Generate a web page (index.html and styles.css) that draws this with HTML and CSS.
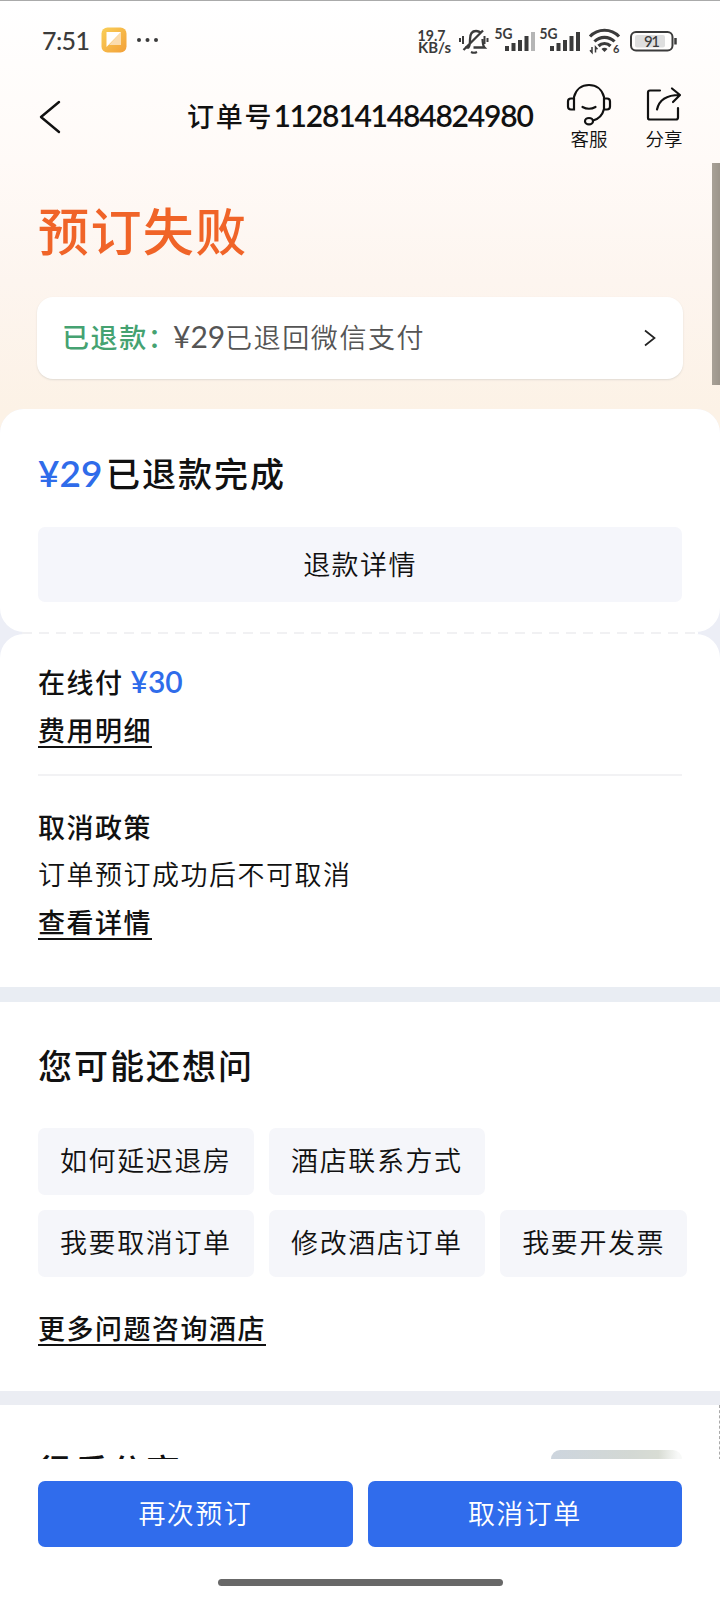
FILE: index.html
```html
<!DOCTYPE html>
<html lang="zh-CN">
<head>
<meta charset="utf-8">
<title>订单详情</title>
<link rel="stylesheet" href="styles.css">
</head>
<body>
<div class="screen">
  <div class="top">
    <div class="status">
      <span class="clock">7:51</span>
      <svg class="app-icon" width="26" height="26" viewBox="0 0 26 26"><defs><linearGradient id="g" x1="0" y1="0" x2="1" y2="1"><stop offset="0" stop-color="#f9cf58"/><stop offset="1" stop-color="#f3a038"/></linearGradient></defs><rect x=".5" y=".5" width="25" height="25" rx="6" fill="url(#g)"/><path d="M20 5v13H8z" fill="#fbdcae"/><path d="M5.500 5H20L5.500 20z" fill="#fff"/></svg>
      <svg class="dots" width="24" height="6" viewBox="0 0 24 6" fill="#3b3b3b"><circle cx="3" cy="3" r="2"/><circle cx="11.500" cy="3" r="2"/><circle cx="20" cy="3" r="2"/></svg>
      <svg class="sys" width="262" height="30" viewBox="416 25 262 30" fill="none" stroke="#3b3b3b" stroke-width="2">
        <path d="M465 46.500h3.500c1.500-1.500 1.500-4 1.500-8 0-5 2-8.500 6-8.500 2.500 0 4 1 5.200 2.700M482.500 38c.2 4 .5 7 2 8.500h-11M463.500 49 483 29.500" stroke-width="2.300"/><path d="M471 51q3 1.500 6 0M460 37v4M463 35v8M484.500 35v8M487.500 37v4"/>
        <g fill="#3b3b3b" stroke="none"><rect x="505" y="45" width="4" height="5"/><rect x="511.500" y="42" width="4" height="8"/><rect x="518" y="39" width="4" height="11"/><rect x="524.500" y="35" width="4" height="15"/><rect x="531" y="31" width="4" height="19" fill="#b5b5b5"/><rect x="550" y="45" width="4" height="5"/><rect x="556.500" y="42" width="4" height="8"/><rect x="563" y="39" width="4" height="11"/><rect x="569.500" y="35" width="4" height="15"/><rect x="576" y="31" width="4" height="19"/><path d="M604.500 51l-3-3a4 4 0 0 1 6 0z"/></g>
        <path d="M590 35.500a20 20 0 0 1 29 0M594.500 40.500a14 14 0 0 1 20 0M598.500 45a8.500 8.500 0 0 1 12 0" stroke-width="3.200"/>
        <path d="M592 46v5.500l-2-2.300M595.500 51.500V46l2 2.300" stroke-width="1.500"/>
        <rect x="631" y="31" width="41.500" height="18.500" rx="5"/><rect x="635" y="34" width="30" height="12.500" rx="2" fill="#dedede" stroke="none"/><path d="M675.500 37v6.500" stroke-width="2.500"/>
        <g class="sys-text"><text x="417.500" y="39.500" textLength="28" lengthAdjust="spacingAndGlyphs">19.7</text><text x="418" y="52" textLength="33" lengthAdjust="spacingAndGlyphs">KB/s</text><text x="494.500" y="38" textLength="18" lengthAdjust="spacingAndGlyphs">5G</text><text x="539.500" y="38" textLength="18" lengthAdjust="spacingAndGlyphs">5G</text><text x="613" y="52" class="small">6</text><text x="644" y="46" class="batt" textLength="16">91</text></g>
      </svg>
    </div>
    <div class="nav">
      <svg class="back" width="22" height="34" viewBox="0 0 22 34"><path d="M20 2 2 17l18 15" fill="none" stroke="#111" stroke-width="2.400" stroke-linecap="round" stroke-linejoin="round"/></svg>
      <h1 class="title">订单号<span class="num">1128141484824980</span></h1>
      <div class="action service">
        <svg width="46" height="44" viewBox="566 83 46 44" fill="none" stroke="#111" stroke-width="2.200" stroke-linecap="round"><path d="M574 97c2-8 8-12 15-12s13 4 15 12M574 98.500h-3q-3 0-3 3v5q0 3 3 3h3zM604 98.500h3q3 0 3 3v5q0 3-3 3h-3zM604 109c-1.500 6-5 10-11 11.500M582.500 107q6.500 3.500 13 0"/><ellipse cx="589" cy="121.200" rx="4" ry="3.200"/></svg>
        <span>客服</span>
      </div>
      <div class="action share">
        <svg width="38" height="38" viewBox="645 86 38 38" fill="none" stroke="#111" stroke-width="2.200" stroke-linecap="round" stroke-linejoin="round"><path d="M660 90.500h-10q-2 0-2 2V118q0 1.500 2 1.500h26q2 0 2-2V108M657 109.500c2-9 9-14.500 22.500-14.500M672 88.500l8 6.500-7 7"/></svg>
        <span>分享</span>
      </div>
    </div>
    <h2 class="state">预订失败</h2>
    <div class="refund">
      <b>已退款：</b><span class="yen">¥29</span><span class="to">已退回微信支付</span>
      <svg width="12" height="18" viewBox="0 0 12 18"><path d="M1 1.500 10.500 9 1 16.500" fill="none" stroke="#222" stroke-width="1.700"/></svg>
    </div>
    <div class="scrollbar"></div>
  </div>
  <div class="ticket">
    <section class="card done">
      <h3 class="heading"><span class="blue">¥29</span>已退款完成</h3>
      <div class="detail">退款详情</div>
    </section>
    <div class="perforation"></div>
    <section class="card fees">
      <p class="strong">在线付<span class="blue">¥30</span></p>
      <p class="strong"><a>费用明细</a></p>
      <div class="rule"></div>
      <p class="strong">取消政策</p>
      <p class="policy">订单预订成功后不可取消</p>
      <p class="strong"><a>查看详情</a></p>
    </section>
  </div>
  <section class="ask">
    <h3 class="heading">您可能还想问</h3>
    <div class="chips"><span>如何延迟退房</span><span>酒店联系方式</span></div>
    <div class="chips"><span>我要取消订单</span><span>修改酒店订单</span><span>我要开发票</span></div>
    <p class="strong more"><a>更多问题咨询酒店</a></p>
  </section>
  <section class="sharing">
    <h3 class="heading">很乐分享</h3>
    <div class="thumb"></div>
    <div class="edge"></div>
  </section>
  <footer class="bar">
    <div class="buttons"><div>再次预订</div><div>取消订单</div></div>
    <div class="home"></div>
  </footer>
</div>
</body>
</html>
```
FILE: styles.css
```css
* { box-sizing: border-box; }
body, h1, h2, h3, p { margin: 0; }
body { background: #fff; color: #111; font-family: "Noto Sans CJK SC", sans-serif; font-weight: 350; }
.screen { width: 720px; height: 1600px; overflow: hidden; display: flex; flex-direction: column; background: #fff; }
.top { position: relative; height: 430px; flex: none; border-top: 1px solid #aaa; background: linear-gradient(#fff 0, #fffaf7 160px, #fdf5ef 280px, #fcf2e6 410px); }
.status { height: 79px; display: flex; align-items: center; padding-left: 42px; color: #3b3b3b; font-family: Lato, sans-serif; }
.clock { width: 58px; font-size: 25px; font-weight: 500; letter-spacing: -.6px; margin-top: -2px; }
.app-icon { margin-left: 1px; margin-top: -1px; }
.dots { margin-left: 9px; margin-top: -2px; }
.sys { flex: none; margin-left: 256px; }
.sys-text { fill: #3b3b3b; stroke: none; font: bold 14.5px Lato, sans-serif; }
.sys-text .small { font-size: 11px; }
.sys-text .batt { font-size: 15px; font-weight: 500; }
.nav { height: 80px; display: flex; padding-left: 39px; }
.back { margin-top: 20px; }
.title { margin: 16px 0 0 126px; width: 350px; font-size: 27px; line-height: 38px; font-weight: 500; letter-spacing: 1.8px; white-space: nowrap; }
.num { font-family: Lato, sans-serif; font-size: 30px; font-weight: 600; letter-spacing: -1.2px; }
.action { display: flex; flex-direction: column; align-items: center; font-size: 18.500px; line-height: 24px; }
.service { margin-left: 29px; width: 46px; padding-top: 3px; }
.service span { margin-top: -1px; }
.share { margin-left: 33px; width: 38px; padding-top: 6px; }
.share span { margin-top: 2px; }
.state { margin: 34px 0 0 38px; font-size: 51px; line-height: 70px; font-weight: 500; letter-spacing: 1.4px; color: #f06428; }
.refund { display: flex; align-items: center; margin: 33px 37px 0; height: 82px; padding: 0 27px 4px 25px; border-radius: 16px; background: #fff; box-shadow: 0 1px 2px #e0dad2; font-size: 27px; letter-spacing: 1.6px; color: #555; white-space: nowrap; }
.refund b { color: #45a271; font-weight: 500; width: 111px; flex: none; }
.refund svg { margin-left: auto; margin-top: 3px; }
.yen { font-family: Lato, sans-serif; font-size: 30px; font-weight: 400; letter-spacing: 0; width: 52px; }
.scrollbar { position: absolute; right: 0; top: 162px; width: 8px; height: 222px; background: linear-gradient(90deg, #a8a197, #9c958b); }
.ticket { height: 578px; flex: none; margin-top: -21px; position: relative; background: #eceef6; border-radius: 24px 24px 0 0; }
.card { background: #fff; padding: 0 38px; border-radius: 24px; }
.done { height: 223px; padding-top: 40px; }
.heading { font-size: 34px; line-height: 48px; letter-spacing: 2px; font-weight: 500; }
.blue { color: #2f6cea; font-family: Lato, sans-serif; font-weight: 600; letter-spacing: 0; }
.heading .blue { display: inline-block; width: 68px; font-size: 37px; }
.detail { height: 75px; margin-top: 30px; border-radius: 7px; background: #f5f6fb; display: flex; align-items: center; justify-content: center; font-size: 27px; letter-spacing: 1.4px; padding-bottom: 3px; }
.perforation { height: 2px; margin: 0 22px; background: repeating-linear-gradient(90deg, #f1f1f3 0 10px, #fff 10px 17px); }
.fees { height: 353px; padding-top: 23px; border-radius: 24px 24px 0 0; font-size: 27px; line-height: 48px; letter-spacing: 1.5px; }
.strong { font-weight: 500; }
.strong .blue { margin-left: 7px; font-size: 30px; }
a { display: inline-block; height: 35px; line-height: 34px; border-bottom: 2px solid #111; vertical-align: top; margin-top: 7px; }
.rule { height: 2px; margin: 20px 0 27px; background: #f2f2f4; }
.policy { margin: -1px 0 0; }
.ask { height: 404px; flex: none; padding: 40px 33px 0 38px; border-top: 15px solid #e9edf3; font-size: 27px; letter-spacing: 1.6px; }
.ask .heading { margin-top: -1px; }
.chips { display: flex; gap: 15.500px; margin-top: 15px; }
.heading + .chips { margin-top: 39px; }
.chips span { height: 67px; line-height: 64px; padding: 0 22px; border-radius: 7px; background: #f5f6fa; white-space: nowrap; }
.more { margin-top: 27px; letter-spacing: 1.5px; }
.sharing { height: 68px; flex: none; position: relative; border-top: 14px solid #ebedf3; padding: 41px 38px 0; display: flex; justify-content: space-between; overflow: hidden; }
.thumb { width: 131px; height: 70px; margin-top: 4px; border-radius: 9px; background: linear-gradient(90deg, #cdd5de, #d3d8d4 60%, #d8dcd4 82%, #f8f9f8 97%); }
.edge { position: absolute; right: 0; top: 0; height: 60px; border-right: 1px dashed #aaa; }
.bar { height: 141px; flex: none; background: #fff; padding: 22px 38px 0; }
.buttons { display: flex; gap: 15px; }
.buttons div { flex: 1; height: 66px; line-height: 63px; text-align: center; border-radius: 7px; background: #306cec; color: #fff; font-size: 27px; letter-spacing: 1.4px; }
.home { width: 285px; height: 7px; border-radius: 4px; background: #686868; margin: 32px auto 0; }
```
